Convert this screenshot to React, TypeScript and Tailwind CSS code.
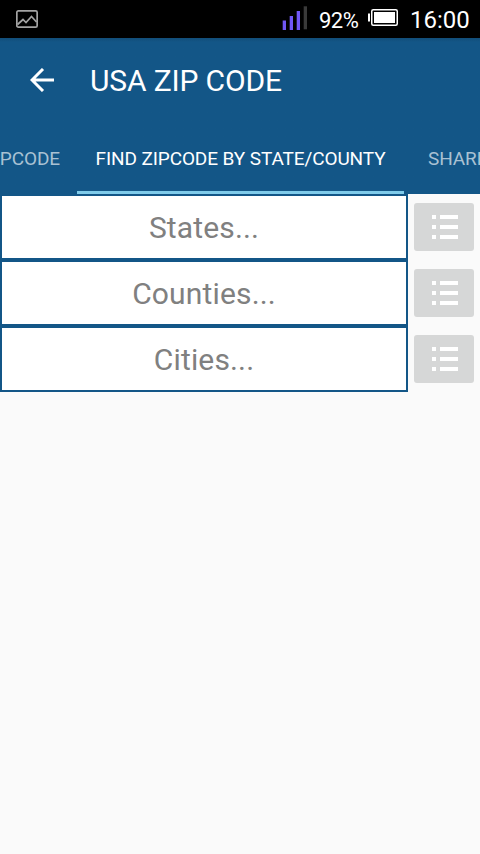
const FIELDS = ['States...', 'Counties...', 'Cities...']

function StatusBar() {
  return (
    <div className="flex h-[38px] items-center bg-black text-white">
      <svg className="ml-4 h-[18px] w-[22px]" viewBox="0 0 22 18" fill="none" stroke="#a3a3a3" strokeWidth="1.7">
        <rect x="0.85" y="0.85" width="20.3" height="16.3" rx="1.5" />
        <path d="M1.5 14.5L7 9.5L10 12.5L15.5 6.5L20.5 12" />
      </svg>
      <div className="flex-1" />
      <svg className="mb-0.5 h-6 w-[25px]" viewBox="0 0 25 24">
        <path d="M0.7 14.5h3.3v9.5h-3.3zM7.7 10h3.3v14h-3.3zM14.7 5h3.3v19h-3.3z" fill="#7057f5" />
        <path d="M21.7 0.3h3.3v23h-3.3z" fill="#3a3a3a" />
      </svg>
      <span className="ml-3 mt-[3px] w-[49px] whitespace-nowrap text-[22px] leading-none tracking-[-0.5px]">92%</span>
      <svg className="mb-1 h-[17px] w-[30px]" viewBox="0 0 30 17">
        <rect x="0" y="4.5" width="2" height="8" fill="#fff" />
        <rect x="3.75" y="0.75" width="25.5" height="15.5" rx="1.5" fill="none" stroke="#fff" strokeWidth="1.5" />
        <rect x="6" y="3" width="21" height="11" fill="#fff" />
      </svg>
      <span className="ml-3 mt-0.5 w-[70px] whitespace-nowrap text-[24px] leading-none">16:00</span>
    </div>
  )
}

function ListButton() {
  return (
    <button type="button" aria-label="List" className="h-12 w-[60px] rounded-[3px] bg-[#d6d7d7]">
      <svg className="h-12 w-[60px]" viewBox="0 0 60 48" fill="#fff">
        <path d="M18 12h4v4h-4zM26 12h18v4H26zM18 22h4v4h-4zM26 22h18v4H26zM18 32h4v4h-4zM26 32h18v4H26z" />
      </svg>
    </button>
  )
}

export default function App() {
  return (
    <div className="h-[854px] w-[480px] overflow-hidden bg-[#fafafa] font-[Roboto,sans-serif]">
      <StatusBar />

      <header className="h-[156px] bg-[#135687] bg-linear-to-b from-[#114d79] to-[#135687] to-[4px] text-white">
        <div className="flex h-[84px] items-center">
          <svg className="ml-[30px] h-6 w-6" viewBox="0 0 24 24" fill="none" stroke="#fff" strokeWidth="3">
            <path d="M24 12H2M13 1L2 12L13 23" />
          </svg>
          <h1 className="ml-9 mt-0.5 whitespace-nowrap text-[30px] leading-none tracking-[-0.15px]">USA ZIP CODE</h1>
        </div>

        <nav className="flex h-[72px] overflow-hidden whitespace-nowrap text-[19px] leading-[73px] tracking-[-0.1px]">
          <div className="flex w-[77px] shrink-0 justify-end pr-[17px] text-[#a9c1d3]">ZIPCODE</div>
          <div className="w-[327px] shrink-0 border-b-[3px] border-[#7fcbea] text-center">FIND ZIPCODE BY STATE/COUNTY</div>
          <div className="shrink-0 pl-6 text-[#a9c1d3]">SHARE</div>
        </nav>
      </header>

      <main>
        {FIELDS.map((label) => (
          <div key={label} className="flex h-[66px] items-center">
            <div className="mr-1.5 h-full w-[408px] border-2 border-[#135687] bg-white text-center text-[30px] leading-[64px] tracking-[0.15px] text-[#808080]">
              {label}
            </div>
            <ListButton />
          </div>
        ))}
      </main>
    </div>
  )
}
